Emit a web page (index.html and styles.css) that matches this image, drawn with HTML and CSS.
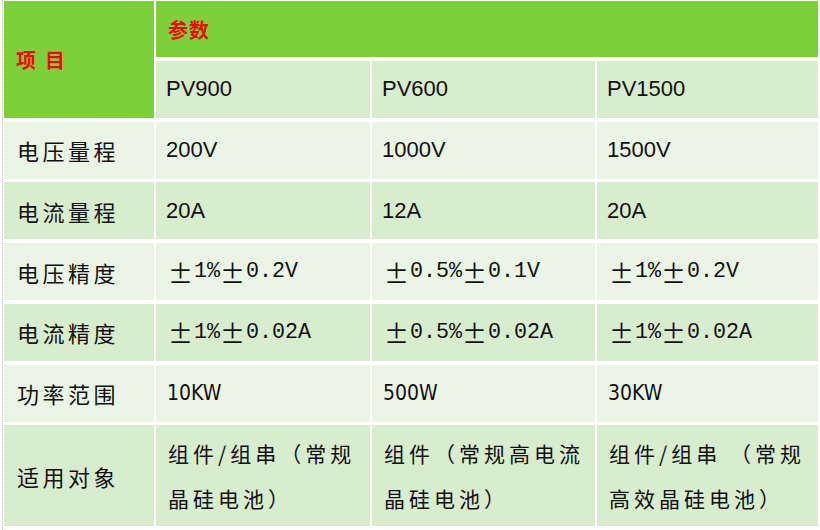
FILE: index.html
```html
<!DOCTYPE html>
<html lang="zh-CN">
<head>
<meta charset="utf-8">
<title>参数表</title>
<link rel="stylesheet" href="styles.css">
</head>
<body>
<div class="frame">
  <div class="sheet">
    <div class="cell head item">项目</div>
    <div class="cell head param">参数</div>

    <div class="row dark">
      <div class="cell lat">PV900</div>
      <div class="cell lat">PV600</div>
      <div class="cell lat">PV1500</div>
    </div>

    <div class="row light">
      <div class="cell label">电压量程</div>
      <div class="cell lat">200V</div>
      <div class="cell lat">1000V</div>
      <div class="cell lat">1500V</div>
    </div>

    <div class="row dark">
      <div class="cell label">电流量程</div>
      <div class="cell lat">20A</div>
      <div class="cell lat">12A</div>
      <div class="cell lat">20A</div>
    </div>

    <div class="row light">
      <div class="cell label">电压精度</div>
      <div class="cell mono"><span class="pm">±</span>1%<span class="pm">±</span>0.2V</div>
      <div class="cell mono"><span class="pm">±</span>0.5%<span class="pm">±</span>0.1V</div>
      <div class="cell mono"><span class="pm">±</span>1%<span class="pm">±</span>0.2V</div>
    </div>

    <div class="row dark">
      <div class="cell label">电流精度</div>
      <div class="cell mono"><span class="pm">±</span>1%<span class="pm">±</span>0.02A</div>
      <div class="cell mono"><span class="pm">±</span>0.5%<span class="pm">±</span>0.02A</div>
      <div class="cell mono"><span class="pm">±</span>1%<span class="pm">±</span>0.02A</div>
    </div>

    <div class="row light">
      <div class="cell label">功率范围</div>
      <div class="cell narrow">10KW</div>
      <div class="cell narrow">500W</div>
      <div class="cell narrow">30KW</div>
    </div>

    <div class="row dark">
      <div class="cell label">适用对象</div>
      <div class="cell zh">组件/组串（常规<br>晶硅电池）</div>
      <div class="cell zh">组件（常规高电流<br>晶硅电池）</div>
      <div class="cell zh">组件/组串 （常规<br>高效晶硅电池）</div>
    </div>
  </div>
</div>
</body>
</html>
```

FILE: styles.css
```css
html, body {
  margin: 0;
  padding: 0;
  background: #ffffff;
}

.frame {
  margin-left: 2px;
  border-left: 1px dotted #c2c2c2;
  padding: 1px 0 0 1px;
  height: 530px;
  box-sizing: border-box;
}

.sheet {
  display: grid;
  grid-template-columns: 150px 214px 223px 221px;
  grid-template-rows: 56px 57px repeat(5, 57px) 101px;
  column-gap: 2px;
  row-gap: 3.75px;
  color: #111111;
}

.row {
  display: contents;
}

.cell {
  display: flex;
  align-items: center;
  padding-left: 10px;
  font-family: "Liberation Sans", Arial, sans-serif;
  font-size: 22px;
  white-space: nowrap;
}

.dark .cell {
  background: #d8ecce;
}

.light .cell {
  background: #ebf5e5;
}

.head {
  background: #7ed03b;
  color: #f00a05;
  font-family: "Noto Sans CJK SC", sans-serif;
  font-weight: 700;
  font-size: 20px;
}

.item {
  grid-row: 1 / span 2;
  grid-column: 1;
  padding-left: 12px;
  letter-spacing: 9px;
}

.param {
  grid-row: 1;
  grid-column: 2 / span 3;
  padding-left: 12px;
  letter-spacing: 1px;
}

.label {
  padding-left: 13px;
  font-family: "Noto Sans CJK SC", sans-serif;
  font-size: 22px;
  letter-spacing: 3.5px;
}

.lat {
  padding-left: 10px;
}

.mono {
  padding-left: 12px;
  font-family: "Liberation Mono", "DejaVu Sans Mono", monospace;
  font-size: 21.7px;
}

.pm {
  display: inline-block;
  width: 26px;
  font-family: "Noto Sans CJK SC", sans-serif;
  font-size: 25px;
  text-align: left;
}

.narrow {
  padding-left: 11px;
  font-family: "DejaVu Sans Condensed", "Liberation Sans", sans-serif;
  font-size: 21px;
  font-weight: 400;
}

.zh {
  padding-left: 12px;
  font-family: "Noto Sans CJK SC", sans-serif;
  font-size: 21px;
  letter-spacing: 4px;
  line-height: 45px;
}
```
